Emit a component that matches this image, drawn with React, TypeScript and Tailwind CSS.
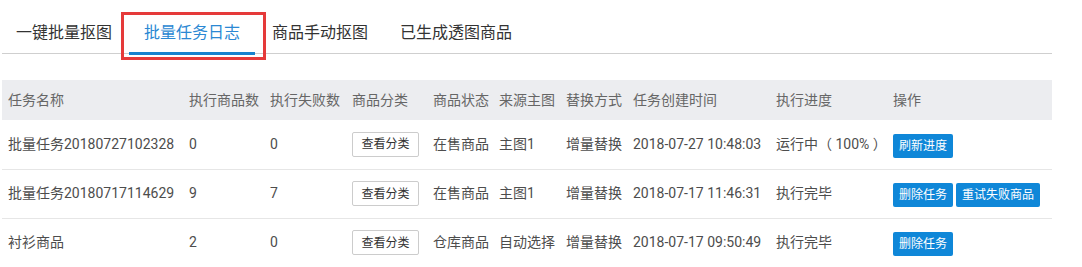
import React from 'react';

const tabs = ['一键批量抠图', '批量任务日志', '商品手动抠图', '已生成透图商品'];

const columns = [
  { title: '任务名称', w: 'w-[181px]' },
  { title: '执行商品数', w: 'w-[81px]' },
  { title: '执行失败数', w: 'w-[82px]' },
  { title: '商品分类', w: 'w-[81px]' },
  { title: '商品状态', w: 'w-[66px]' },
  { title: '来源主图', w: 'w-[67px]' },
  { title: '替换方式', w: 'w-[67px]' },
  { title: '任务创建时间', w: 'w-[143px]' },
  { title: '执行进度', w: 'w-[117px]' },
  { title: '操作', w: 'w-[165px]' },
];

const rows = [
  {
    name: '批量任务20180727102328',
    total: '0',
    failed: '0',
    status: '在售商品',
    source: '主图1',
    mode: '增量替换',
    time: '2018-07-27 10:48:03',
    progress: '运行中（ 100% ）',
    actions: ['刷新进度'],
  },
  {
    name: '批量任务20180717114629',
    total: '9',
    failed: '7',
    status: '在售商品',
    source: '主图1',
    mode: '增量替换',
    time: '2018-07-17 11:46:31',
    progress: '执行完毕',
    actions: ['删除任务', '重试失败商品'],
  },
  {
    name: '衬衫商品',
    total: '2',
    failed: '0',
    status: '仓库商品',
    source: '自动选择',
    mode: '增量替换',
    time: '2018-07-17 09:50:49',
    progress: '执行完毕',
    actions: ['删除任务'],
  },
];

const font = { fontFamily: 'Roboto, "Noto Sans CJK SC", sans-serif' };

export default function App() {
  return (
    <div className="w-[1082px] h-[267px] bg-white overflow-hidden" style={font}>
      {/* Tabs */}
      <div className="ml-[2px] w-[1050px] h-[54px] border-b border-[#cfcfcf] flex items-end gap-[4px]">
        {tabs.map((t, i) => {
          const active = i === 1;
          return (
            <div
              key={t}
              className={
                'relative px-[14px] h-[54px] flex items-center pt-[14px] text-[16px] leading-[20px] whitespace-nowrap ' +
                (active ? 'text-[#2b88d3]' : 'text-[#333333]')
              }
            >
              {t}
              {active && (
                <>
                  <span className="absolute left-[-1px] right-[-1px] bottom-[-2px] h-[3px] bg-[#1782cf]" />
                  <span className="absolute left-[-9px] right-[-12px] top-[13px] bottom-[-7px] border-[3px] border-[#e53a3a]" />
                </>
              )}
            </div>
          );
        })}
      </div>

      {/* Table */}
      <table className="ml-[2px] mt-[26px] w-[1050px] table-fixed border-collapse text-[14px]">
        <colgroup>
          {columns.map((c) => (
            <col key={c.title} className={c.w} />
          ))}
        </colgroup>
        <thead>
          <tr className="bg-[#ecedf0] h-[40px]">
            {columns.map((c) => (
              <th key={c.title} className="pl-[6px] text-left font-normal text-[#666666] whitespace-nowrap">
                {c.title}
              </th>
            ))}
          </tr>
        </thead>
        <tbody>
          {rows.map((r) => (
            <tr key={r.name} className="h-[49px] border-b border-[#e6e6e6] text-[#4d4d4d]">
              <td className="pl-[6px] whitespace-nowrap">{r.name}</td>
              <td className="pl-[6px]">{r.total}</td>
              <td className="pl-[6px]">{r.failed}</td>
              <td className="pl-[6px]">
                <button className="h-[25px] w-[67px] border border-[#cccccc] rounded-[2px] bg-white text-[12px] text-[#333333]">
                  查看分类
                </button>
              </td>
              <td className="pl-[6px] whitespace-nowrap">{r.status}</td>
              <td className="pl-[6px] whitespace-nowrap">{r.source}</td>
              <td className="pl-[6px] whitespace-nowrap">{r.mode}</td>
              <td className="pl-[6px] whitespace-nowrap">{r.time}</td>
              <td className="pl-[6px] whitespace-nowrap">{r.progress}</td>
              <td className="pl-[6px]">
                <div className="flex gap-[3px] pt-[3px]">
                  {r.actions.map((a) => (
                    <button
                      key={a}
                      className="h-[24px] px-[6px] rounded-[2px] bg-[#0f87d8] text-white text-[12px] leading-[24px] whitespace-nowrap"
                    >
                      {a}
                    </button>
                  ))}
                </div>
              </td>
            </tr>
          ))}
        </tbody>
      </table>
    </div>
  );
}
